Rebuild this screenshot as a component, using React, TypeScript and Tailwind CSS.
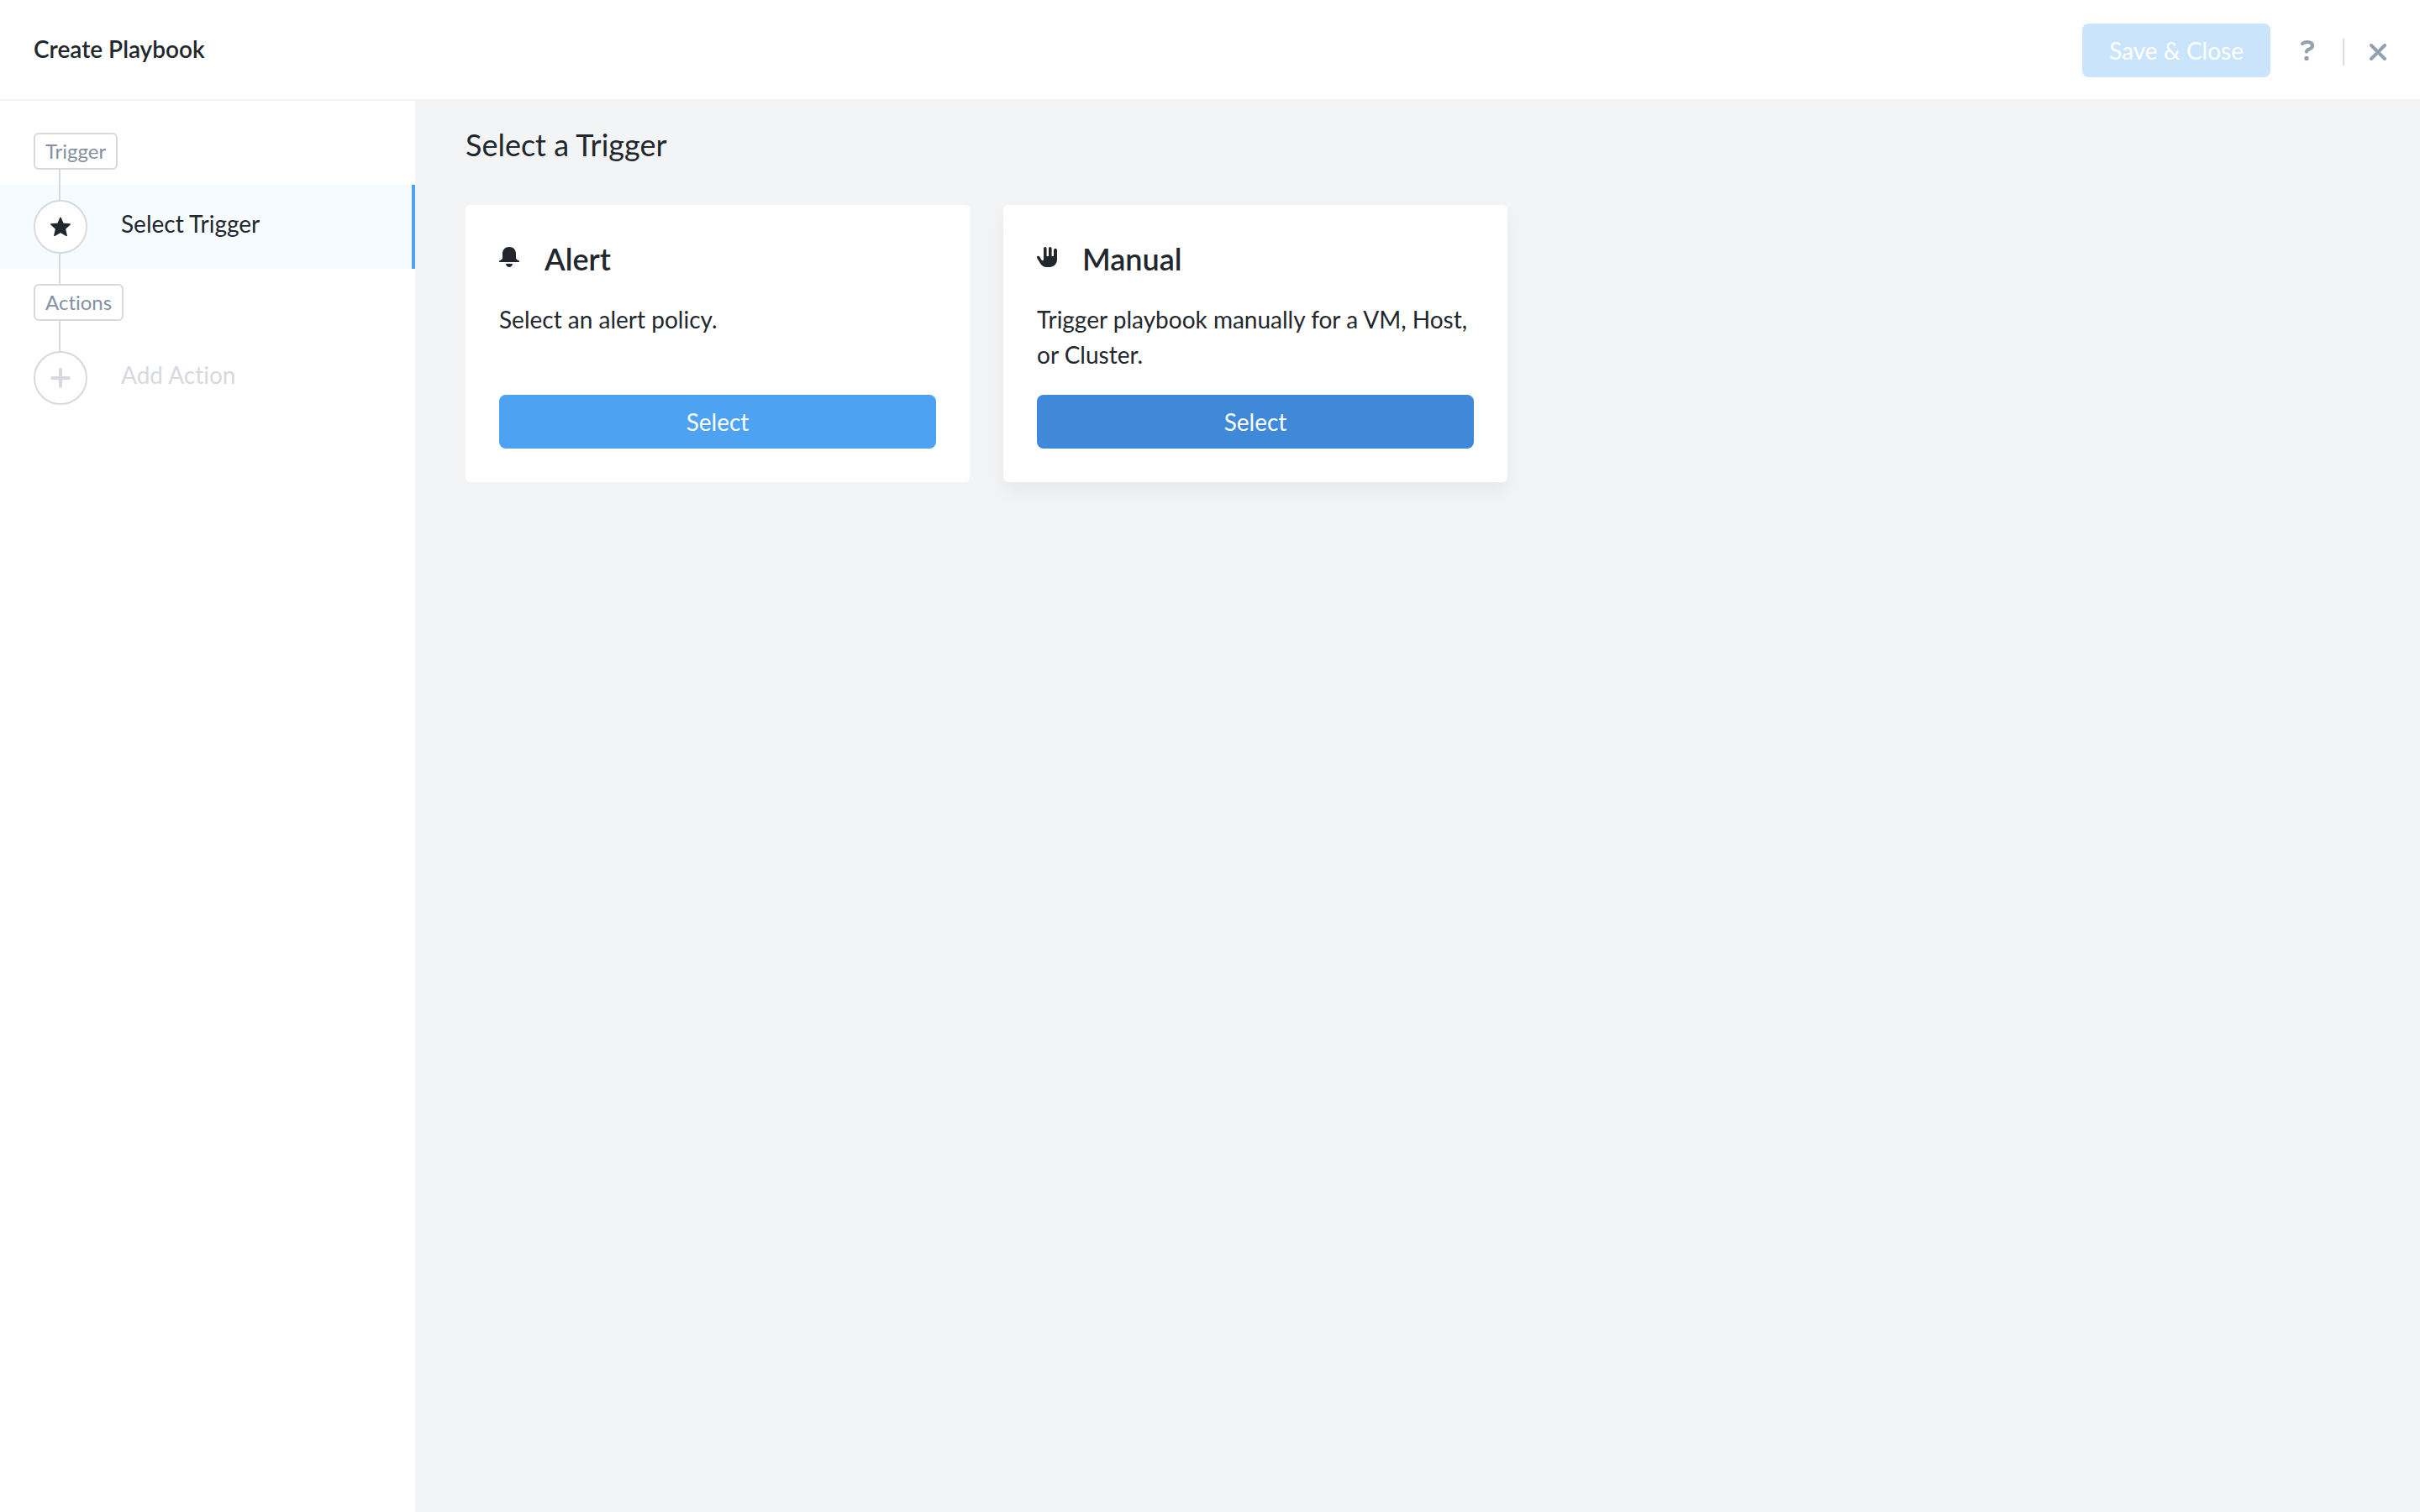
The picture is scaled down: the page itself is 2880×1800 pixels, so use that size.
import React from 'react';

interface IconProps {
  className?: string;
}

const StarIcon: React.FC<IconProps> = ({ className }) => (
  <svg viewBox="0 0 24 24" className={className} fill="currentColor" stroke="currentColor" strokeWidth="1.6" strokeLinejoin="round" aria-hidden="true">
    <path d="M12 1.4 14.9 8.3 23.2 9 17.3 14.4 19.1 22.4 12 18.4 4.9 22.4 6.7 14.4 0.8 9 9.1 8.3Z" />
  </svg>
);

const PlusIcon: React.FC<IconProps> = ({ className }) => (
  <svg viewBox="0 0 24 24" className={className} stroke="currentColor" strokeWidth="4" strokeLinecap="round" aria-hidden="true">
    <path d="M12 2v20M2 12h20" />
  </svg>
);

const BellIcon: React.FC<IconProps> = ({ className }) => (
  <svg viewBox="0 0 24 24" className={className} fill="currentColor" aria-hidden="true">
    <path d="M12 0c-5 0-8 3.4-8 8v5c0 1.2-.8 2-2 2.6-1.2.6-2 .9-2 1.6V18h24v-.8c0-.7-.8-1-2-1.600-1.2-.6-2-1.4-2-2.600V8c0-4.600-3-8-8-8Z" />
    <path d="M8 20h8c0 2.200-1.800 4-4 4s-4-1.800-4-4Z" />
  </svg>
);

const HandIcon: React.FC<IconProps> = ({ className }) => (
  <svg viewBox="0 0 24 24" className={className} fill="currentColor" aria-hidden="true">
    <path d="M8 1.8a1.800 1.800 0 0 1 3.600 0V11h2.400V1.800a1.800 1.800 0 0 1 3.600 0V11h2.400V3.800a2 2 0 0 1 4 0V15c0 5-4 9-9 9h-3.500c-3.500 0-6-1.800-7.500-4.500C2.500 17 .8 14.500 0 12.800c-.5-2 2.200-2.800 3.200-1.200L5.500 15.500c.6 1 2.500 1 2.500-.7Z" />
  </svg>
);

const HelpIcon: React.FC<IconProps> = ({ className }) => (
  <svg viewBox="0 0 24 24" className={className} fill="none" aria-hidden="true">
    <path d="M6 4C7.800 2.500 9.700 2 12 2c3.800 0 6 1.600 6 4.600 0 4.800-7 3-7 7" stroke="currentColor" strokeWidth="4.200" strokeLinecap="round" strokeLinejoin="round" />
    <circle cx="11" cy="21.400" r="2.700" fill="currentColor" />
  </svg>
);

const CloseIcon: React.FC<IconProps> = ({ className }) => (
  <svg viewBox="0 0 20 20" className={className} stroke="currentColor" strokeWidth="4" strokeLinecap="round" aria-hidden="true">
    <path d="M2 2l16 16M18 2 2 18" />
  </svg>
);

const Header: React.FC = () => (
  <header className="flex items-center justify-between bg-white border-b-2 border-[#f2f4f6] px-10 pt-7 pb-[26px]">
    <h1 className="mb-1 font-semibold">Create Playbook</h1>
    <div className="flex items-center">
      <button type="button" disabled className="h-16 px-8 rounded-lg bg-[#cae4fb] text-white">
        Save &amp; Close
      </button>
      <div className="ml-8 mt-1 flex items-center gap-[30px] text-[#94a0b0]">
        <button type="button" aria-label="Help" className="mb-1">
          <HelpIcon className="block size-6 overflow-visible" />
        </button>
        <div className="h-8 w-0.5 bg-[#d9dde2]" />
        <button type="button" aria-label="Close">
          <CloseIcon className="block size-5" />
        </button>
      </div>
    </div>
  </header>
);

const Connector: React.FC = () => <div className="ml-[30px] h-[18px] w-0.5 bg-[#d6d9e0]" />;

const StepTag: React.FC<{ label: string }> = ({ label }) => (
  <div className="px-10">
    <div className="flex h-11 w-fit items-center rounded-md border-2 border-[#d6d9e0] px-3 text-2xl text-[#8491a3]">
      {label}
    </div>
    <Connector />
  </div>
);

interface StepProps {
  label: string;
  icon: React.ReactNode;
  active?: boolean;
  last?: boolean;
}

const Step: React.FC<StepProps> = ({ label, icon, active, last }) => (
  <button
    type="button"
    className={`block w-full pl-10 text-left ${
      active ? 'bg-[#f5fbff] border-r-4 border-[#4da3f2] text-[#22272e]' : 'text-[#d6d9e0]'
    }`}
  >
    <Connector />
    <span className="flex items-center gap-10">
      <span className="flex size-16 items-center justify-center rounded-full border-2 border-[#d6d9e0] bg-white">
        {icon}
      </span>
      <span className="mb-2">{label}</span>
    </span>
    {!last && <Connector />}
  </button>
);

const Sidebar: React.FC = () => (
  <nav className="w-[494px] shrink-0 bg-white pt-[38px]">
    <StepTag label="Trigger" />
    <Step label="Select Trigger" icon={<StarIcon className="size-6" />} active />
    <div className="ml-10">
      <Connector />
    </div>
    <StepTag label="Actions" />
    <Step label="Add Action" icon={<PlusIcon className="size-6" />} last />
  </nav>
);

interface TriggerCardProps {
  title: string;
  description: string;
  icon: React.ReactNode;
  hovered?: boolean;
}

const TriggerCard: React.FC<TriggerCardProps> = ({ title, description, icon, hovered }) => (
  <section
    className={`flex w-[600px] flex-col gap-[27px] rounded-md bg-white p-10 ${
      hovered ? 'shadow-[0_12px_24px_rgba(0,0,0,0.05)]' : ''
    }`}
  >
    <div className="flex items-center gap-[30px]">
      <span className="mb-1">{icon}</span>
      <h3 className="text-4xl leading-12 font-semibold">{title}</h3>
    </div>
    <p className="min-h-[84px] leading-[42px]">{description}</p>
    <button
      type="button"
      className={`h-16 rounded-lg text-white ${hovered ? 'bg-[#4089d9]' : 'bg-[#4da3f2]'}`}
    >
      Select
    </button>
  </section>
);

export default function App() {
  return (
    <div className="flex min-h-screen flex-col bg-[#f2f4f6] font-['Lato',sans-serif] text-[28px] leading-10 text-[#22272e] [font-variant-ligatures:none]">
      <Header />
      <div className="flex grow">
        <Sidebar />
        <main className="grow px-[60px] pt-7">
          <h2 className="mb-12 text-4xl leading-12">Select a Trigger</h2>
          <div className="flex flex-wrap items-start gap-10">
            <TriggerCard
              title="Alert"
              description="Select an alert policy."
              icon={<BellIcon className="block size-6" />}
            />
            <TriggerCard
              title="Manual"
              description="Trigger playbook manually for a VM, Host, or Cluster."
              icon={<HandIcon className="block size-6" />}
              hovered
            />
          </div>
        </main>
      </div>
    </div>
  );
}
